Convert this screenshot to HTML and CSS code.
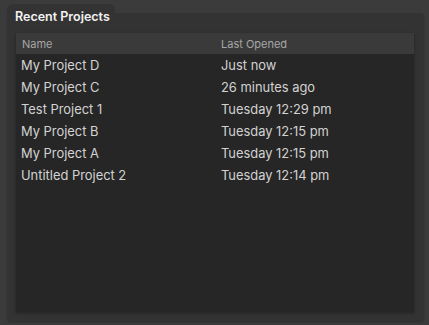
FILE: index.html
```html
<!DOCTYPE html>
<html>
<head>
    <title>Recent Projects</title>
    <meta name="viewport" content="width=device-width, initial-scale=1.0">
    <link rel="stylesheet" href="styles.css">
</head>
<body>
    <div class="panel-wrap">
        <div class="tab">Recent Projects</div>
        <div class="panel">
            <div class="list">
                <div class="row header">
                    <span class="col-name">Name</span>
                    <span class="col-date">Last Opened</span>
                </div>
                <div class="row">
                    <span class="col-name">My Project D</span>
                    <span class="col-date">Just now</span>
                </div>
                <div class="row">
                    <span class="col-name">My Project C</span>
                    <span class="col-date">26 minutes ago</span>
                </div>
                <div class="row">
                    <span class="col-name">Test Project 1</span>
                    <span class="col-date">Tuesday 12:29 pm</span>
                </div>
                <div class="row">
                    <span class="col-name">My Project B</span>
                    <span class="col-date">Tuesday 12:15 pm</span>
                </div>
                <div class="row">
                    <span class="col-name">My Project A</span>
                    <span class="col-date">Tuesday 12:15 pm</span>
                </div>
                <div class="row">
                    <span class="col-name">Untitled Project 2</span>
                    <span class="col-date">Tuesday 12:14 pm</span>
                </div>
            </div>
        </div>
    </div>
</body>
</html>
```

FILE: styles.css
```css
* {
    box-sizing: border-box;
    margin: 0;
    padding: 0;
}

body {
    background-color: #3b3b3b;
    font-family: Inter, "Noto Sans", sans-serif;
    width: 429px;
    height: 325px;
    overflow: hidden;
    padding: 4px 5px 0 7px;
}

/* Tab + panel */
.panel-wrap {
    display: flex;
    flex-direction: column;
}

.tab {
    align-self: flex-start;
    width: 108px;
    height: 9px;
    background-color: #333333;
    border-radius: 6px 6px 0 0;
    color: #f2f2f2;
    font-size: 12.5px;
    font-weight: 600;
    padding-left: 8px;
    line-height: 26px;
    position: relative;
    z-index: 1;
    overflow: visible;
    white-space: nowrap;
}

.panel {
    background-color: #333333;
    height: 308px;
    border-radius: 0 4px 4px 4px;
    padding: 20px 10px 9px 9px;
    box-shadow: 0 1px 2px rgba(0, 0, 0, 0.25);
}

/* Project list */
.list {
    height: 100%;
    background-color: #262626;
    box-shadow: 0 1px 3px rgba(0, 0, 0, 0.35);
}

.row {
    display: flex;
    height: 22px;
    align-items: center;
    color: #d2d2d2;
    font-size: 12.9px;
    padding-left: 5px;
}

.row.header {
    height: 21px;
    background-color: #3a3a3a;
    color: #a6a6a6;
    font-size: 11px;
    padding-left: 6px;
}

.col-name {
    width: 200px;
}

.row.header .col-name {
    width: 199px;
}
```
